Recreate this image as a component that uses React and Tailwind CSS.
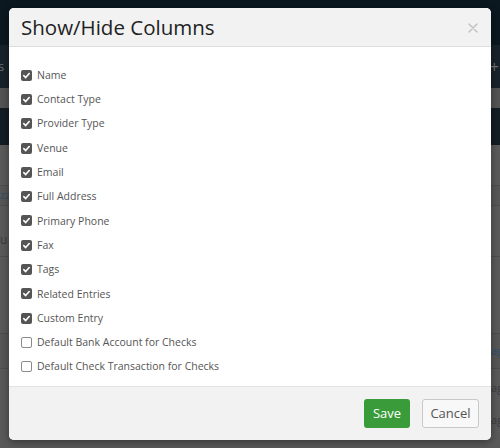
import React from "react";

const items = [
  ["Name", true],
  ["Contact Type", true],
  ["Provider Type", true],
  ["Venue", true],
  ["Email", true],
  ["Full Address", true],
  ["Primary Phone", true],
  ["Fax", true],
  ["Tags", true],
  ["Related Entries", true],
  ["Custom Entry", true],
  ["Default Bank Account for Checks", false],
  ["Default Check Transaction for Checks", false],
];

function Box({ checked }) {
  if (checked) {
    return (
      <span className="flex h-[11px] w-[11px] shrink-0 items-center justify-center rounded-[2px] bg-[#555555]">
        <svg width="9" height="9" viewBox="0 0 10 10">
          <path d="M2 5.2 L4.1 7.3 L8 2.8" fill="none" stroke="#ffffff" strokeWidth="1.8" strokeLinecap="round" strokeLinejoin="round" />
        </svg>
      </span>
    );
  }
  return <span className="block h-[11px] w-[11px] shrink-0 rounded-[2px] border border-[#8a8a8a] bg-white" />;
}

export default function App() {
  return (
    <div className="relative h-[448px] w-[500px] overflow-hidden bg-[#595959]" style={{ fontFamily: '"Open Sans", "Noto Sans", sans-serif' }}>
      {/* dimmed page behind */}
      <div className="flex flex-col">
        <div className="h-[45px] bg-[#0b1820]" />
        <div className="flex h-[43px] items-center justify-between bg-[#18222a] text-[13px] text-[#6a7278]">
          <span className="-ml-[2px]">s</span>
          <span className="mr-[1px] text-[16px] text-[#707070]">+</span>
        </div>
        <div className="h-[20px] bg-[#545454]" />
        <div className="h-[37px] bg-[#131d24]" />
        <div className="h-[40px] bg-[#5b5b5b]" />
        <div className="flex h-[20px] items-center justify-between border-t border-[#4e4e4e] bg-[#575757] text-[11px] text-[#2f4d66]">
          <span>zz</span>
          <span />
        </div>
        <div className="h-[18px] border-t border-[#4e4e4e] bg-[#5a5a5a]" />
        <div className="flex h-[34px] items-center border-b border-[#4e4e4e] bg-[#5a5a5a] text-[12px] text-[#3a3a3a]">
          <span>u t</span>
        </div>
        <div className="h-[76px] bg-[#5a5a5a]" />
        <div className="flex h-[36px] items-center justify-end border-y border-[#4e4e4e] bg-[#575757] text-[11px] text-[#2f4d66]">
          <span className="-mr-[3px]">ag</span>
        </div>
        <div className="flex h-[38px] items-center justify-end bg-[#5a5a5a] text-[11px] text-[#3a3a3a]">
          <span className="-mr-[3px]">ag</span>
        </div>
        <div className="flex h-[26px] items-center justify-end bg-[#5a5a5a] text-[11px] text-[#3a3a3a]">
          <span className="-mr-[3px]">ag</span>
        </div>
      </div>

      {/* modal */}
      <div className="absolute left-[9px] top-[8px] flex h-[432px] w-[482px] flex-col overflow-hidden rounded-[5px] bg-white shadow-[0_2px_8px_rgba(0,0,0,0.4)]">
        <div className="flex h-[39px] shrink-0 items-center justify-between border-b border-[#dddddd] bg-[#f2f2f2] pl-[12px] pr-[13px]">
          <span className="text-[20.5px] leading-none text-[#222222]">Show/Hide Columns</span>
          <svg width="10" height="10" viewBox="0 0 10 10" className="mt-[2px]">
            <path d="M1 1 L9 9 M9 1 L1 9" stroke="#bdbdbd" strokeWidth="1.3" strokeLinecap="round" />
          </svg>
        </div>
        <div className="flex flex-1 flex-col pl-[12px] pt-[16px]">
          {items.map(([label, checked]) => (
            <div key={label} className="flex h-[24.3px] items-center gap-[5px]">
              <Box checked={checked} />
              <span className="text-[10.5px] leading-none text-[#555555]">{label}</span>
            </div>
          ))}
        </div>
        <div className="flex h-[54px] shrink-0 items-center justify-end gap-[12px] border-t border-[#e3e3e3] bg-[#f2f2f2] pr-[12px]">
          <button className="h-[29px] w-[46px] rounded-[3px] bg-[#3a9b3a] text-[13px] text-white">Save</button>
          <button className="h-[29px] w-[57px] rounded-[3px] border border-[#c8c8c8] bg-[#f8f8f8] text-[13px] text-[#555555]">Cancel</button>
        </div>
      </div>
    </div>
  );
}
